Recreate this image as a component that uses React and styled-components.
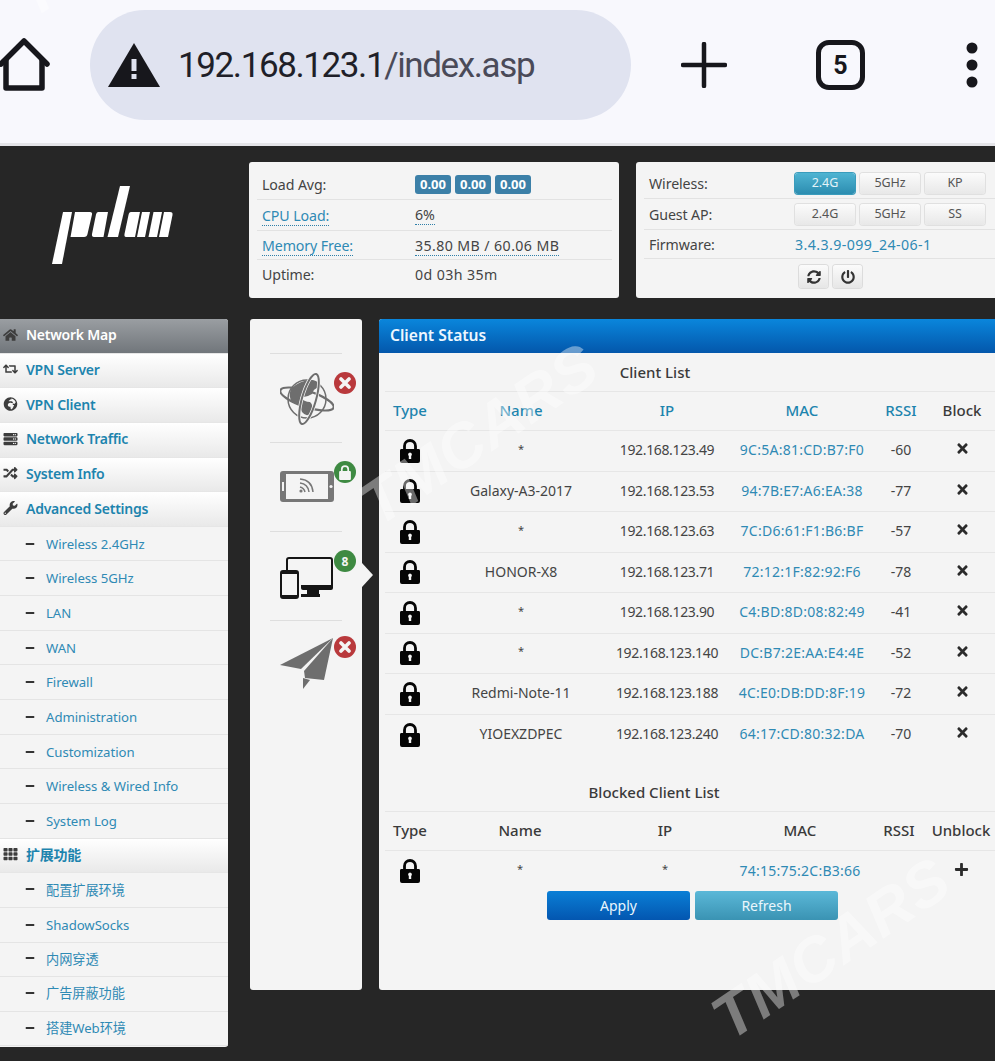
import React from "react";
import styled, { createGlobalStyle } from "styled-components";
import {
  FaHome,
  FaRetweet,
  FaGlobeAfrica,
  FaServer,
  FaRandom,
  FaWrench,
  FaTh,
  FaMinus,
  FaTimes,
  FaPlus,
  FaSyncAlt,
  FaPowerOff,
} from "react-icons/fa";

const GlobalStyle = createGlobalStyle`
  html, body { margin: 0; padding: 0; background: #262626; }
  * { box-sizing: border-box; }
`;

const FONT = `"Noto Sans", "Noto Sans CJK SC", sans-serif`;

const Page = styled.div`
  position: relative;
  width: 995px;
  height: 1061px;
  overflow: hidden;
  background: #262626;
  font-family: ${FONT};
  color: #444;
`;

// browser chrome
const BrowserBar = styled.div`
  height: 146px;
  background: #f8f8fd;
  border-bottom: 3px solid #e4e4e8;
  display: flex;
  align-items: center;
  padding-bottom: 13px;
`;
const HomeBtn = styled.div`
  width: 90px;
  display: flex;
`;
const UrlPill = styled.div`
  width: 541px;
  height: 110px;
  border-radius: 55px;
  background: #e0e3f0;
  display: flex;
  align-items: center;
  padding-left: 18px;
  gap: 18px;
`;
const UrlText = styled.span`
  font-family: Roboto, sans-serif;
  font-size: 35px;
  letter-spacing: -1.4px;
  color: #1f1f28;
  & > span {
    color: #4a4a58;
  }
`;
const BarActions = styled.div`
  flex: 1;
  display: flex;
  align-items: center;
  padding-left: 50px;
  gap: 89px;
  & > svg:last-child {
    margin-left: 12px;
  }
`;
const TabCount = styled.div`
  width: 49px;
  height: 50px;
  border: 5px solid #17171c;
  border-radius: 13px;
  display: flex;
  align-items: center;
  justify-content: center;
  font: 700 25px Roboto, sans-serif;
  color: #17171c;
`;

// router page
const Content = styled.div`
  display: grid;
  grid-template-columns: 228px 1fr;
  grid-template-rows: 136px auto;
  column-gap: 21px;
  row-gap: 21px;
  padding-top: 16px;
  width: 1020px;
`;
const LogoWrap = styled.div`
  display: flex;
  align-items: flex-start;
  padding: 24px 0 0 52px;
`;
const TopCards = styled.div`
  display: flex;
  gap: 17px;
`;
const InfoCard = styled.div`
  width: ${(p) => p.$width}px;
  height: 136px;
  background: #f4f4f4;
  border-radius: 3px;
  padding: ${(p) => p.$pad};
`;
const InfoRow = styled.div`
  height: ${(p) => p.$h || 30}px;
  display: flex;
  align-items: center;
  padding-left: 5px;
  border-bottom: ${(p) => (p.$last ? "none" : "1px solid #e2e2e2")};
  font-size: 14.2px;
  letter-spacing: -0.1px;
`;
const InfoLabel = styled.span`
  width: ${(p) => p.$width}px;
  flex-shrink: 0;
`;
const Value = styled.span`
  letter-spacing: 0.4px;
`;
const Hint = styled.span`
  color: ${(p) => (p.$blue ? "#2f8ab4" : "inherit")};
  border-bottom: 1px dotted #2f7fa8;
  line-height: 18px;
`;
const Badge = styled.span`
  display: inline-block;
  width: 36px;
  height: 19px;
  margin-right: 4px;
  border-radius: 3px;
  background: #3c80a8;
  color: #fff;
  font-size: 13px;
  font-weight: 700;
  letter-spacing: 0;
  line-height: 19px;
  text-align: center;
`;
const ToggleGroup = styled.div`
  display: flex;
  gap: 5px;
`;
const Toggle = styled.div`
  width: 60px;
  height: 21px;
  border-radius: 3px;
  font-size: 12.5px;
  line-height: 20px;
  text-align: center;
  color: ${(p) => (p.$active ? "#e4f3f8" : "#555")};
  background: ${(p) =>
    p.$active
      ? "linear-gradient(#4fb4d2, #2c8db0)"
      : "linear-gradient(#fbfbfb, #e8e8e8)"};
  box-shadow: 0 0 0 1px ${(p) => (p.$active ? "#3a9cbc" : "#e0e0e0")};
`;
const FirmwareLink = styled.span`
  color: #2f8ab4;
  letter-spacing: 0.4px;
`;
const ToolRow = styled.div`
  display: flex;
  gap: 5px;
  padding: 6px 0 0 155px;
`;
const ToolBtn = styled.div`
  width: 29px;
  height: 23px;
  border-radius: 3px;
  display: flex;
  align-items: center;
  justify-content: center;
  font-size: 14px;
  color: #333;
  background: linear-gradient(#fbfbfb, #e6e6e6);
  box-shadow: 0 0 0 1px #dcdcdc;
`;

const Sidebar = styled.nav`
  width: 228px;
  height: 728px;
  background: #f4f4f4;
  border-radius: 0 3px 3px 0;
  overflow: hidden;
`;
const MenuHead = styled.div`
  height: 34.65px;
  display: flex;
  align-items: center;
  padding: 0 0 2px 3px;
  font-size: 14px;
  font-weight: 600;
  letter-spacing: -0.25px;
  color: ${(p) => (p.$active ? "#fff" : "#1d84ae")};
  background: ${(p) =>
    p.$active
      ? "linear-gradient(#9a9ea2, #71767b)"
      : "linear-gradient(#ffffff, #e9e9e9)"};
  border-bottom: 1px solid #e6e6e6;
  & > svg {
    width: 15px;
    height: 14px;
    margin-right: 8px;
    color: #3d3d3d;
  }
`;
const MenuSub = styled.div`
  height: 34.65px;
  display: flex;
  align-items: center;
  padding: 0 0 ${(p) => (p.$cjk ? 2 : 0)}px 25px;
  font-size: 13.2px;
  letter-spacing: -0.05px;
  color: #2f8ab4;
  border-bottom: 1px solid #e4e4e4;
  & > svg {
    width: 10px;
    height: 10px;
    margin-right: 11px;
    color: #333;
  }
`;

const Workspace = styled.div`
  display: flex;
  align-items: flex-start;
  gap: 17px;
`;
const IconRail = styled.div`
  position: relative;
  width: 112px;
  height: 671px;
  margin-left: 1px;
  background: #f4f4f4;
  border-radius: 3px;
  padding: 34px 20px 0;
`;
const RailItem = styled.div`
  position: relative;
  height: 89px;
  border-top: 1px solid #dedede;
  padding: ${(p) => p.$top}px 0 0 10px;
`;
const StatusDot = styled.div`
  position: absolute;
  top: ${(p) => p.$top || 18}px;
  right: -14px;
  width: 22px;
  height: 22px;
  border-radius: 50%;
  background: ${(p) => p.$color};
  color: #f4f4f4;
  display: flex;
  align-items: center;
  justify-content: center;
  font-size: 12px;
  font-weight: 700;
`;
const RailArrow = styled.div`
  position: absolute;
  top: 244px;
  right: -11px;
  width: 0;
  height: 0;
  border-left: 11px solid #f4f4f4;
  border-top: 12px solid transparent;
  border-bottom: 12px solid transparent;
`;

const Panel = styled.main`
  width: 640px;
  height: 671px;
  background: #f4f4f4;
  border-radius: 3px;
`;
const PanelHead = styled.div`
  height: 34px;
  padding: 0 0 2px 11px;
  display: flex;
  align-items: center;
  background: linear-gradient(#0a86dc, #0357ab);
  color: #eef7ff;
  font-size: 15.6px;
  font-weight: 600;
  border-radius: 3px 3px 0 0;
`;
const PanelBody = styled.div`
  padding: 0 0 0 6px;
`;
const Row = styled.div`
  display: grid;
  grid-template-columns: ${(p) => p.$cols};
  height: ${(p) => p.$h}px;
  align-items: center;
  justify-items: center;
  border-bottom: ${(p) => (p.$plain ? "none" : "1px solid #e6e6e6")};
  font-size: 14px;
`;
const TableTitle = styled.div`
  grid-column: 1 / span 5;
  font-weight: 500;
  font-size: 15px;
  color: #3a3a3a;
`;
const Th = styled.div`
  margin-top: -2px;
  font-weight: 500;
  font-size: 15px;
  color: ${(p) => (p.$blue ? "#1d84ae" : "#3a3a3a")};
`;
const Td = styled.div`
  margin-top: -2px;
`;
const IpCell = styled(Td)`
  letter-spacing: -0.35px;
`;
const MacCell = styled(Td)`
  color: #2f8ab4;
  letter-spacing: 0.25px;
`;
const Star = styled(Td)`
  font-size: 11px;
  margin-top: -5px;
`;
const ActionIcon = styled.div`
  display: flex;
  color: #2b2b2b;
  font-size: 15px;
  margin-top: -4px;
`;
const Spacer = styled.div`
  height: ${(p) => p.$h}px;
`;
const ButtonRow = styled.div`
  display: flex;
  justify-content: flex-start;
  gap: 5px;
  padding-left: 162px;
`;
const ActionButton = styled.div`
  width: 143px;
  height: 29px;
  border-radius: 3px;
  color: #eaf6fc;
  font-size: 14px;
  line-height: 29px;
  text-align: center;
  background: ${(p) =>
    p.$primary
      ? "linear-gradient(#0a7fd6, #0356b0)"
      : "linear-gradient(#5bb8d8, #3a93b3)"};
`;

const Watermark = styled.div`
  position: absolute;
  left: ${(p) => p.$x}px;
  top: ${(p) => p.$y}px;
  transform: rotate(-34deg);
  transform-origin: left bottom;
  font-family: "Liberation Sans", sans-serif;
  font-style: italic;
  font-weight: 700;
  font-size: 62px;
  letter-spacing: 1px;
  line-height: 1;
  color: rgba(255, 255, 255, 0.4);
  pointer-events: none;
  white-space: nowrap;
`;

const HouseIcon = () => (
  <svg width="50" height="54" viewBox="0 0 50 54" fill="none" stroke="#17171c" strokeWidth="5.5" strokeLinejoin="round" strokeLinecap="round">
    <path d="M1 26 L24 3 L47 26" />
    <path d="M6 22 V50 H42 V22" />
  </svg>
);

const WarnIcon = () => (
  <svg width="52" height="44" viewBox="0 0 52 44">
    <path d="M26 0 L52 44 H0 Z" fill="#17171c" />
    <rect x="23.5" y="16" width="5" height="12" fill="#e0e3f0" />
    <rect x="23.5" y="31" width="5" height="5" fill="#e0e3f0" />
  </svg>
);

const PlusIcon = () => (
  <svg width="46" height="46" viewBox="0 0 46 46" stroke="#17171c" strokeWidth="4.5" strokeLinecap="round">
    <path d="M23 2 V44 M2 23 H44" />
  </svg>
);

const DotsIcon = () => (
  <svg width="12" height="46" viewBox="0 0 12 46" fill="#17171c">
    <circle cx="6" cy="6" r="5.5" />
    <circle cx="6" cy="23" r="5.5" />
    <circle cx="6" cy="40" r="5.5" />
  </svg>
);

const PdanLogo = () => (
  <svg width="122" height="80" viewBox="0 0 122 80" fill="#fff">
    <path d="M11 26 H20 L10 78 H0 Z" />
    <path d="M23 26 H38 Q40.500 26 40 28.500 L35.500 48 Q35 51 32 51 H18.500 Z" />
    <path d="M46 26 H56 L51.500 51 H42 Q39.500 51 40 48 L44 28.500 Q44.500 26 46 26 Z" />
    <path d="M68 0 H78 L66 51 H55.500 Z" />
    <path d="M79 26 H88 L83 51 H74 Q72 51 72.500 48 L76.500 29 Q77 26 79 26 Z" />
    <path d="M90 26 H98 L93 51 H85 Z" />
    <path d="M101.500 26 H110 L105 51 H96.500 Z" />
    <path d="M112 26 H118 Q121 26 120.500 29 L116 51 H107 Z" />
  </svg>
);

const GlobeIcon = () => (
  <svg width="54" height="54" viewBox="0 0 54 54" fill="none">
    <circle cx="27" cy="27" r="19" fill="#f4f4f4" stroke="#6e6e6e" strokeWidth="1.500" />
    <path d="M11 17 Q22 6 36 9 L41 15 Q33 16 32 22 Q26 26 20 25 Q24 30 30 30 Q35 34 30 42 Q26 45 22 40 Q20 32 12 30 Q8 24 11 17 Z" fill="#6e6e6e" />
    <ellipse cx="27" cy="27" rx="28" ry="8" transform="rotate(18 27 27)" stroke="#6e6e6e" strokeWidth="2.200" />
    <ellipse cx="29" cy="27" rx="7" ry="26" transform="rotate(16 29 27)" stroke="#f4f4f4" strokeWidth="3.500" />
    <ellipse cx="29" cy="27" rx="7" ry="26" transform="rotate(16 29 27)" stroke="#6e6e6e" strokeWidth="2" />
  </svg>
);

const PhoneIcon = () => (
  <svg width="54" height="31" viewBox="0 0 54 31" fill="none">
    <rect x="0" y="0" width="54" height="31" rx="3" fill="#777" />
    <rect x="6" y="3" width="42" height="25" fill="#f4f4f4" />
    <rect x="2" y="11" width="2" height="9" fill="#f4f4f4" />
    <circle cx="51" cy="15.500" r="1.600" fill="#f4f4f4" />
    <g stroke="#777" strokeWidth="1.500">
      <path d="M20 8 Q32 9 33 21" />
      <path d="M20 12 Q28 13 29 21" />
      <path d="M20 16 Q24 17 25 21" />
    </g>
    <circle cx="21" cy="20" r="1.600" fill="#777" />
  </svg>
);

const DevicesIcon = () => (
  <svg width="54" height="42" viewBox="0 0 54 42" fill="none">
    <path d="M7 13 V3 Q7 1 9 1 H50 Q52 1 52 3 V30" stroke="#151515" strokeWidth="2" />
    <path d="M21 28 H53 V31 Q53 33 51 33 H23 Q21 33 21 31 Z" fill="#151515" />
    <rect x="27" y="33" width="12" height="4" fill="#151515" />
    <rect x="21" y="37" width="19" height="3" fill="#151515" />
    <rect x="1" y="14" width="17" height="27" rx="2" fill="#f4f4f4" stroke="#151515" strokeWidth="2" />
    <rect x="1" y="14" width="17" height="3" fill="#151515" />
    <rect x="1" y="38" width="17" height="3" fill="#151515" />
  </svg>
);

const PlaneIcon = () => (
  <svg width="54" height="52" viewBox="0 0 54 52" fill="#6e6e6e">
    <path d="M53 0 L0 27 L21 31 Z" />
    <path d="M53 0 L24 33 L25 40 L44 42 Z" />
    <path d="M23 40 L30 42 L23 51 Z" />
  </svg>
);

const PadLock = () => (
  <svg width="20" height="24" viewBox="0 0 20 24">
    <path d="M4.500 11 V7 A5.500 5.500 0 0 1 15.500 7 V11" fill="none" stroke="#050505" strokeWidth="2.800" />
    <path d="M1 10 H19 Q20 10 20 11.500 V22 Q20 24 18 24 H2 Q0 24 0 22 V11.500 Q0 10 1 10 Z M10 13.500 A2 2 0 0 0 8.800 17 V20 H11.200 V17 A2 2 0 0 0 10 13.500 Z" fill="#050505" fillRule="evenodd" />
  </svg>
);

const MiniLock = () => (
  <svg width="14" height="15" viewBox="0 0 13 14" fill="#f4f4f4">
    <path d="M3.500 6 V4 A3 3 0 0 1 9.500 4 V6" fill="none" stroke="#f4f4f4" strokeWidth="1.600" />
    <rect x="1" y="5.500" width="11" height="8.500" rx="1" />
  </svg>
);

const DotCross = () => (
  <svg width="12" height="12" viewBox="0 0 12 12" stroke="#f4f4f4" strokeWidth="3.600" strokeLinecap="round">
    <path d="M2 2 L10 10 M10 2 L2 10" />
  </svg>
);

const menu = [
  { t: "Network Map", icon: FaHome, active: true },
  { t: "VPN Server", icon: FaRetweet },
  { t: "VPN Client", icon: FaGlobeAfrica },
  { t: "Network Traffic", icon: FaServer },
  { t: "System Info", icon: FaRandom },
  { t: "Advanced Settings", icon: FaWrench },
  { t: "Wireless 2.4GHz" },
  { t: "Wireless 5GHz" },
  { t: "LAN" },
  { t: "WAN" },
  { t: "Firewall" },
  { t: "Administration" },
  { t: "Customization" },
  { t: "Wireless & Wired Info" },
  { t: "System Log" },
  { t: "扩展功能", icon: FaTh },
  { t: "配置扩展环境", cjk: true },
  { t: "ShadowSocks" },
  { t: "内网穿透", cjk: true },
  { t: "广告屏蔽功能", cjk: true },
  { t: "搭建Web环境", cjk: true },
];

const clients = [
  ["*", "192.168.123.49", "9C:5A:81:CD:B7:F0", "-60"],
  ["Galaxy-A3-2017", "192.168.123.53", "94:7B:E7:A6:EA:38", "-77"],
  ["*", "192.168.123.63", "7C:D6:61:F1:B6:BF", "-57"],
  ["HONOR-X8", "192.168.123.71", "72:12:1F:82:92:F6", "-78"],
  ["*", "192.168.123.90", "C4:BD:8D:08:82:49", "-41"],
  ["*", "192.168.123.140", "DC:B7:2E:AA:E4:4E", "-52"],
  ["Redmi-Note-11", "192.168.123.188", "4C:E0:DB:DD:8F:19", "-72"],
  ["YIOEXZDPEC", "192.168.123.240", "64:17:CD:80:32:DA", "-70"],
];

const COLS = "50px 172px 120px 150px 48px 74px";
const BLOCKED_COLS = "50px 170px 120px 150px 48px 76px";

export default function App() {
  return (
    <Page>
      <GlobalStyle />
      <BrowserBar>
        <HomeBtn>
          <HouseIcon />
        </HomeBtn>
        <UrlPill>
          <WarnIcon />
          <UrlText>
            192.168.123.1<span>/index.asp</span>
          </UrlText>
        </UrlPill>
        <BarActions>
          <PlusIcon />
          <TabCount>5</TabCount>
          <DotsIcon />
        </BarActions>
      </BrowserBar>

      <Content>
        <LogoWrap>
          <PdanLogo />
        </LogoWrap>
        <TopCards>
          <InfoCard $width={370} $pad="8px 7px 0 8px">
            <InfoRow $h={30}>
              <InfoLabel $width={153}>Load Avg:</InfoLabel>
              <Badge>0.00</Badge>
              <Badge>0.00</Badge>
              <Badge>0.00</Badge>
            </InfoRow>
            <InfoRow $h={31}>
              <InfoLabel $width={153}>
                <Hint $blue>CPU Load:</Hint>
              </InfoLabel>
              <Hint>6%</Hint>
            </InfoRow>
            <InfoRow $h={29}>
              <InfoLabel $width={153}>
                <Hint $blue>Memory Free:</Hint>
              </InfoLabel>
              <Value>
                <Hint>35.80 MB / 60.06 MB</Hint>
              </Value>
            </InfoRow>
            <InfoRow $h={29} $last>
              <InfoLabel $width={153}>Uptime:</InfoLabel>
              <Value>0d 03h 35m</Value>
            </InfoRow>
          </InfoCard>
          <InfoCard $width={380} $pad="7px 0 0 8px">
            <InfoRow $h={30}>
              <InfoLabel $width={146}>Wireless:</InfoLabel>
              <ToggleGroup>
                <Toggle $active>2.4G</Toggle>
                <Toggle>5GHz</Toggle>
                <Toggle>KP</Toggle>
              </ToggleGroup>
            </InfoRow>
            <InfoRow $h={31}>
              <InfoLabel $width={146}>Guest AP:</InfoLabel>
              <ToggleGroup>
                <Toggle>2.4G</Toggle>
                <Toggle>5GHz</Toggle>
                <Toggle>SS</Toggle>
              </ToggleGroup>
            </InfoRow>
            <InfoRow $h={29}>
              <InfoLabel $width={146}>Firmware:</InfoLabel>
              <FirmwareLink>3.4.3.9-099_24-06-1</FirmwareLink>
            </InfoRow>
            <ToolRow>
              <ToolBtn>
                <FaSyncAlt />
              </ToolBtn>
              <ToolBtn>
                <FaPowerOff />
              </ToolBtn>
            </ToolRow>
          </InfoCard>
        </TopCards>

        <Sidebar>
          {menu.map((m) =>
            m.icon ? (
              <MenuHead key={m.t} $active={m.active}>
                <m.icon />
                {m.t}
              </MenuHead>
            ) : (
              <MenuSub key={m.t} $cjk={m.cjk}>
                <FaMinus />
                {m.t}
              </MenuSub>
            )
          )}
        </Sidebar>

        <Workspace>
          <IconRail>
            <RailItem $top={18}>
              <GlobeIcon />
              <StatusDot $color="#b9393c">
                <DotCross />
              </StatusDot>
            </RailItem>
            <RailItem $top={28}>
              <PhoneIcon />
              <StatusDot $color="#3e8a42">
                <MiniLock />
              </StatusDot>
            </RailItem>
            <RailItem $top={25}>
              <DevicesIcon />
              <StatusDot $color="#3e8a42">8</StatusDot>
            </RailItem>
            <RailItem $top={17}>
              <PlaneIcon />
              <StatusDot $color="#b9393c" $top={15}>
                <DotCross />
              </StatusDot>
            </RailItem>
            <RailArrow />
          </IconRail>

          <Panel>
            <PanelHead>Client Status</PanelHead>
            <PanelBody>
              <Row $cols={COLS} $h={39}>
                <TableTitle>Client List</TableTitle>
              </Row>
              <Row $cols={COLS} $h={39}>
                <Th $blue>Type</Th>
                <Th $blue>Name</Th>
                <Th $blue>IP</Th>
                <Th $blue>MAC</Th>
                <Th $blue>RSSI</Th>
                <Th>Block</Th>
              </Row>
              {clients.map((c, i) => (
                <Row key={c[2]} $cols={COLS} $h={40.5} $plain={i === clients.length - 1}>
                  <PadLock />
                  {c[0] === "*" ? <Star>*</Star> : <Td>{c[0]}</Td>}
                  <IpCell>{c[1]}</IpCell>
                  <MacCell>{c[2]}</MacCell>
                  <Td>{c[3]}</Td>
                  <ActionIcon>
                    <FaTimes />
                  </ActionIcon>
                </Row>
              ))}
              <Spacer $h={17} />
              <Row $cols={BLOCKED_COLS} $h={40}>
                <TableTitle>Blocked Client List</TableTitle>
              </Row>
              <Row $cols={BLOCKED_COLS} $h={39}>
                <Th>Type</Th>
                <Th>Name</Th>
                <Th>IP</Th>
                <Th>MAC</Th>
                <Th>RSSI</Th>
                <Th>Unblock</Th>
              </Row>
              <Row $cols={BLOCKED_COLS} $h={40} $plain>
                <PadLock />
                <Star>*</Star>
                <Star>*</Star>
                <MacCell>74:15:75:2C:B3:66</MacCell>
                <Td />
                <ActionIcon>
                  <FaPlus />
                </ActionIcon>
              </Row>
              <ButtonRow>
                <ActionButton $primary>Apply</ActionButton>
                <ActionButton>Refresh</ActionButton>
              </ButtonRow>
            </PanelBody>
          </Panel>
        </Workspace>
      </Content>

      <Watermark $x={38} $y={-34}>
        TMCARS
      </Watermark>
      <Watermark $x={384} $y={474}>
        TMCARS
      </Watermark>
      <Watermark $x={736} $y={988}>
        TMCARS
      </Watermark>
    </Page>
  );
}
